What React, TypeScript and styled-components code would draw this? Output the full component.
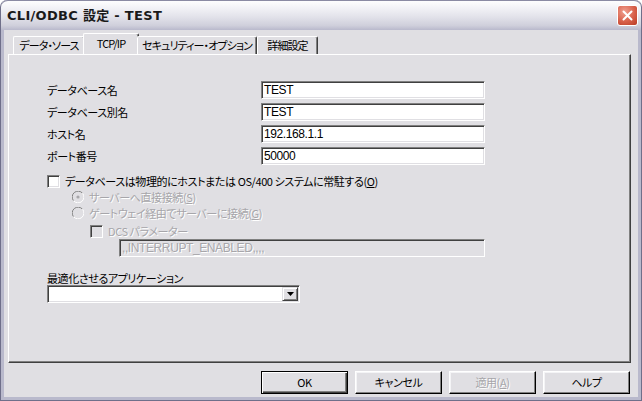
import styled, { createGlobalStyle } from "styled-components";

const GlobalStyle = createGlobalStyle`
  html, body {
    margin: 0;
    padding: 0;
    background: #ffffff;
  }
  body {
    font-family: "Noto Sans CJK JP", "DejaVu Sans", sans-serif;
    font-size: 11px;
    line-height: 13px;
    letter-spacing: -0.4px;
    font-feature-settings: "palt";
    color: #000;
  }
`;

const Window = styled.div`
  width: 642px;
  height: 401px;
  box-sizing: border-box;
  display: flex;
  flex-direction: column;
  background: #e0dfe3;
  border: 1px solid #6f6f8a;
  border-top: none;
  border-radius: 7px 7px 0 0;
  box-shadow: inset 3px 0 #b9b9cc, inset -3px 0 #b9b9cc, inset 0 -3px #b9b9cc;
  overflow: hidden;
`;

const TitleBar = styled.div`
  height: 30px;
  flex: none;
  display: flex;
  align-items: center;
  justify-content: space-between;
  padding: 0 3px 0 6px;
  box-sizing: border-box;
  border-radius: 7px 7px 0 0;
  border-top: 1px solid #8b8ba3;
  background: linear-gradient(
    to bottom,
    #fefefe 0%,
    #f2f2f6 25%,
    #e2e2ea 55%,
    #cfcfdb 85%,
    #b9b9cc 100%
  );
`;

const Title = styled.span`
  font-family: "DejaVu Sans", "Noto Sans CJK JP", sans-serif;
  font-weight: bold;
  font-size: 13px;
  letter-spacing: 0.3px;
  color: #1a1a1a;
`;

const CloseButton = styled.div`
  width: 21px;
  height: 21px;
  box-sizing: border-box;
  border: 1px solid #ffffff;
  border-radius: 3px;
  background: radial-gradient(circle at 35% 30%, #f0a090 0%, #d8604a 55%, #b83a24 100%);
  display: flex;
  align-items: center;
  justify-content: center;
`;

const Body = styled.div`
  flex: 1;
  display: flex;
  flex-direction: column;
  padding: 6px 10px 0 7px;
`;

const TabStrip = styled.div`
  display: flex;
  align-items: flex-end;
  height: 18px;
  padding-left: 5px;
  position: relative;
  z-index: 1;
`;

const Tab = styled.div<{ $active?: boolean; $w: number }>`
  box-sizing: border-box;
  flex: none;
  width: ${(p) => (p.$active ? p.$w + 4 : p.$w)}px;
  height: ${(p) => (p.$active ? "21px" : "18px")};
  margin: ${(p) => (p.$active ? "0 -2px -2px -2px" : "0")};
  padding-bottom: ${(p) => (p.$active ? "1px" : "0")};
  display: flex;
  align-items: center;
  justify-content: center;
  letter-spacing: -0.9px;
  background: #e0dfe3;
  border-top: 1px solid #ffffff;
  border-left: 1px solid #ffffff;
  border-right: 1px solid #404040;
  box-shadow: inset -1px 0 #808080;
  border-radius: 2px 2px 0 0;
  white-space: nowrap;
  align-self: ${(p) => (p.$active ? "flex-start" : "flex-end")};
  position: relative;
  top: ${(p) => (p.$active ? "-3px" : "0")};
`;

const Panel = styled.div`
  height: 309px;
  box-sizing: border-box;
  border-top: 1px solid #ffffff;
  border-left: 1px solid #ffffff;
  border-right: 1px solid #404040;
  border-bottom: 1px solid #404040;
  box-shadow: inset -1px -1px #808080;
  padding: 26px 0 0 38px;
  display: flex;
  flex-direction: column;
`;

const FieldGrid = styled.div`
  display: grid;
  grid-template-columns: 214px 224px;
  row-gap: 4px;
  align-items: center;
`;

const Label = styled.span<{ $disabled?: boolean }>`
  white-space: nowrap;
  color: ${(p) => (p.$disabled ? "#a7a6aa" : "#000")};
  text-shadow: ${(p) => (p.$disabled ? "1px 1px 0 #ffffff" : "none")};
`;

const TextBox = styled.div<{ $disabled?: boolean; $width?: number }>`
  box-sizing: border-box;
  height: 18px;
  width: ${(p) => (p.$width ? `${p.$width}px` : "auto")};
  background: ${(p) => (p.$disabled ? "#e0dfe3" : "#ffffff")};
  border-style: solid;
  border-width: 1px;
  border-color: #808080 #ffffff #ffffff #808080;
  box-shadow: inset 1px 1px #404040, inset -1px -1px #e0dfe3;
  padding: 0 2px;
  display: flex;
  align-items: center;
  font-family: "Liberation Sans", "Noto Sans CJK JP", sans-serif;
  font-size: 12px;
  letter-spacing: -0.4px;
  color: ${(p) => (p.$disabled ? "#a7a6aa" : "#000")};
  text-shadow: ${(p) => (p.$disabled ? "1px 1px 0 #ffffff" : "none")};
  white-space: nowrap;
  overflow: hidden;
`;

const OptionRow = styled.div<{ $indent: number; $mt: number }>`
  display: flex;
  align-items: center;
  gap: 5px;
  height: 14px;
  margin-left: ${(p) => p.$indent}px;
  margin-top: ${(p) => p.$mt}px;
`;

const CheckBox = styled.div<{ $disabled?: boolean }>`
  box-sizing: border-box;
  width: 13px;
  height: 13px;
  flex: none;
  background: ${(p) => (p.$disabled ? "#e0dfe3" : "#ffffff")};
  border-style: solid;
  border-width: 1px;
  border-color: #808080 #ffffff #ffffff #808080;
  box-shadow: inset 1px 1px #404040, inset -1px -1px #e0dfe3;
`;

const Block = styled.div<{ $indent: number; $mt: number }>`
  margin-left: ${(p) => p.$indent}px;
  margin-top: ${(p) => p.$mt}px;
`;

const Combo = styled.div`
  box-sizing: border-box;
  width: 253px;
  height: 18px;
  background: #ffffff;
  border-style: solid;
  border-width: 1px;
  border-color: #808080 #ffffff #ffffff #808080;
  box-shadow: inset 1px 1px #404040, inset -1px -1px #e0dfe3;
  display: flex;
  justify-content: flex-end;
  padding: 1px;
`;

const ComboButton = styled.div`
  box-sizing: border-box;
  width: 16px;
  height: 14px;
  background: #e0dfe3;
  border-style: solid;
  border-width: 1px;
  border-color: #e0dfe3 #404040 #404040 #e0dfe3;
  box-shadow: inset 1px 1px #ffffff, inset -1px -1px #808080;
  display: flex;
  align-items: center;
  justify-content: center;
`;

const ButtonRow = styled.div`
  display: flex;
  justify-content: flex-end;
  gap: 7px;
  margin-top: 8px;
  padding-right: 1px;
`;

const Button = styled.div<{ $default?: boolean; $disabled?: boolean }>`
  box-sizing: border-box;
  width: 87px;
  height: 23px;
  display: flex;
  align-items: center;
  justify-content: center;
  background: #e0dfe3;
  border: 1px solid ${(p) => (p.$default ? "#000000" : "#ffffff")};
  border-right-color: #000000;
  border-bottom-color: #000000;
  box-shadow: ${(p) =>
    p.$default
      ? "inset 1px 1px #ffffff, inset -1px -1px #404040, inset -2px -2px #808080"
      : "inset -1px -1px #808080, inset 1px 1px #f4f4f6"};
  color: ${(p) => (p.$disabled ? "#a7a6aa" : "#000")};
  text-shadow: ${(p) => (p.$disabled ? "1px 1px 0 #ffffff" : "none")};
`;

const Radio = ({ checked }: { checked?: boolean }) => (
  <svg width="12" height="12" viewBox="0 0 12 12" style={{ flex: "none" }}>
    <path d="M10.5 2.2 A5.2 5.2 0 0 0 1.6 9.8" fill="none" stroke="#808080" strokeWidth="1" />
    <path d="M1.6 9.8 A5.2 5.2 0 0 0 10.5 2.2" fill="none" stroke="#ffffff" strokeWidth="1" />
    <circle cx="6" cy="6" r="4.2" fill="#e0dfe3" />
    {checked && <circle cx="6" cy="6" r="1.6" fill="#a7a6aa" />}
  </svg>
);

const CloseIcon = () => (
  <svg width="11" height="11" viewBox="0 0 11 11">
    <path d="M1.5 1.5 L9.5 9.5 M9.5 1.5 L1.5 9.5" stroke="#ffffff" strokeWidth="2" strokeLinecap="round" />
  </svg>
);

const DownArrow = () => (
  <svg width="7" height="4" viewBox="0 0 7 4">
    <path d="M0 0 H7 L3.5 4 Z" fill="#000" />
  </svg>
);

const fields = [
  { label: "データベース名", value: "TEST" },
  { label: "データベース別名", value: "TEST" },
  { label: "ホスト名", value: "192.168.1.1" },
  { label: "ポート番号", value: "50000" },
];

const tabs = [
  { label: "データ・ソース", w: 72 },
  { label: "TCP/IP", w: 52, active: true },
  { label: "セキュリティー・オプション", w: 120 },
  { label: "詳細設定", w: 61 },
];

export default function App() {
  return (
    <>
      <GlobalStyle />
      <Window>
        <TitleBar>
          <Title>CLI/ODBC 設定 - TEST</Title>
          <CloseButton>
            <CloseIcon />
          </CloseButton>
        </TitleBar>
        <Body>
          <TabStrip>
            {tabs.map((t) => (
              <Tab key={t.label} $w={t.w} $active={t.active}>
                {t.label}
              </Tab>
            ))}
          </TabStrip>
          <Panel>
            <FieldGrid>
              {fields.map((f) => [
                <Label key={f.label}>{f.label}</Label>,
                <TextBox key={f.label + "-value"}>{f.value}</TextBox>,
              ])}
            </FieldGrid>
            <OptionRow $indent={0} $mt={9}>
              <CheckBox />
              <Label>
                データベースは物理的にホストまたは OS/400 システムに常駐する(<u>O</u>)
              </Label>
            </OptionRow>
            <OptionRow $indent={25} $mt={2}>
              <Radio checked />
              <Label $disabled>
                サーバーへ直接接続(<u>S</u>)
              </Label>
            </OptionRow>
            <OptionRow $indent={25} $mt={2}>
              <Radio />
              <Label $disabled>
                ゲートウェイ経由でサーバーに接続(<u>G</u>)
              </Label>
            </OptionRow>
            <OptionRow $indent={43} $mt={4}>
              <CheckBox $disabled />
              <Label $disabled>DCS パラメーター</Label>
            </OptionRow>
            <Block $indent={72} $mt={1}>
              <TextBox $disabled $width={366}>
                ,,INTERRUPT_ENABLED,,,,
              </TextBox>
            </Block>
            <OptionRow $indent={0} $mt={14}>
              <Label>最適化させるアプリケーション</Label>
            </OptionRow>
            <Block $indent={0} $mt={0}>
              <Combo>
                <ComboButton>
                  <DownArrow />
                </ComboButton>
              </Combo>
            </Block>
          </Panel>
          <ButtonRow>
            <Button $default>OK</Button>
            <Button>キャンセル</Button>
            <Button $disabled>
              適用(<u>A</u>)
            </Button>
            <Button>ヘルプ</Button>
          </ButtonRow>
        </Body>
      </Window>
    </>
  );
}
